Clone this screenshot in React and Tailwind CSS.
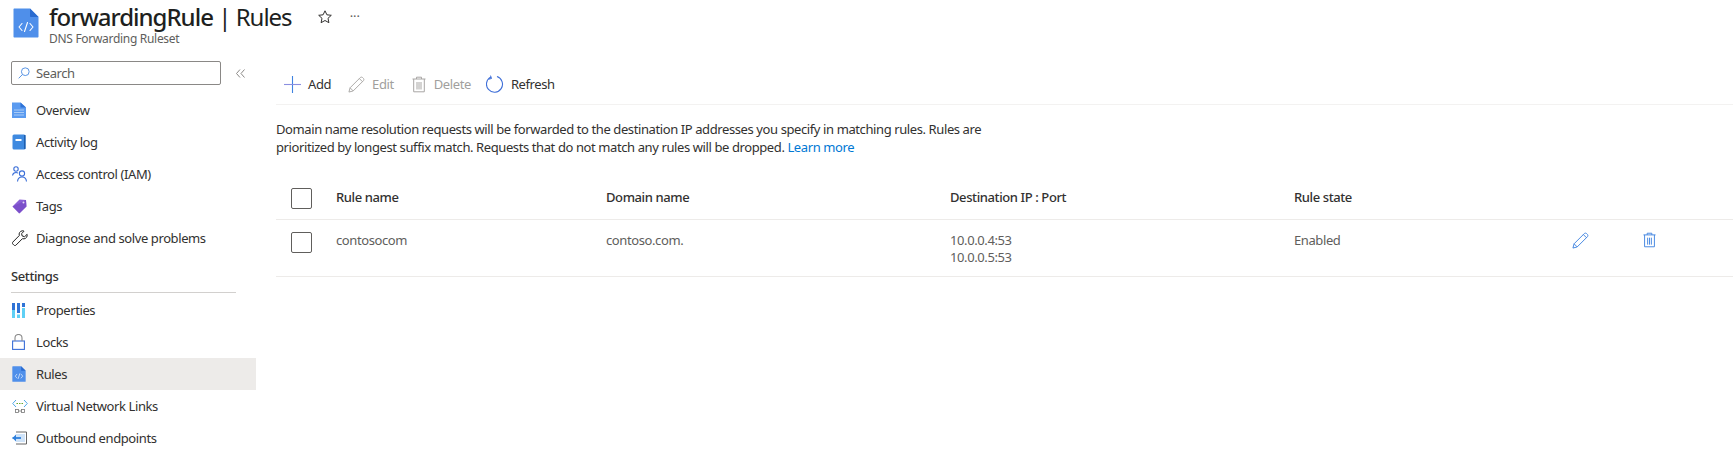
import React from "react";

const Code = ({ big }) => (
  <svg width={big ? 26 : 14} height={big ? 30 : 16} viewBox="0 0 26 30" fill="none">
    <path d="M.5 1.500C.5.900.900.500 1.500.500H17l8.500 8.500v19.500c0 .600-.400 1-1 1h-23c-.600 0-1-.400-1-1z" fill="#4f8fea" />
    <path d="M17 .500 25.500 9H18c-.600 0-1-.400-1-1z" fill="#2a6bd0" />
    <path d="M9 15.500l-3 3.500 3 3.500M17 15.500l3 3.500-3 3.500M14.500 14.500l-3 9" stroke={big ? "#fff" : "#cfe1fa"} strokeWidth={big ? 1.1 : 1.6} strokeLinecap="round" strokeLinejoin="round" />
  </svg>
);

const Overview = () => (
  <svg width="14" height="16" viewBox="0 0 14 16">
    <path d="M0 .500h8.500L14 5.500V16H0z" fill="#5b9bf0" />
    <path d="M8.500.500 14 5.500H8.500z" fill="#2f73d6" />
    <path d="M2 8h10M2 10.500h10M2 13h10" stroke="#a9cbf6" strokeWidth="1" />
  </svg>
);

const Activity = () => (
  <svg width="14" height="16" viewBox="0 0 14 16">
    <rect x="0.500" y="0.500" width="13" height="15" rx="1.500" fill="#3f8ae0" />
    <rect x="12" y="1" width="1.500" height="14" fill="#1f5fae" />
    <rect x="3.500" y="5" width="6" height="2" fill="#fff" />
  </svg>
);

const People = () => (
  <svg width="16" height="16" viewBox="0 0 16 16" fill="none" stroke="#3b6fd8" strokeWidth="1.100">
    <circle cx="4" cy="3" r="2.200" />
    <path d="M.5 9.500C1 7 2.500 6.500 4 6.500c.800 0 1.500.200 2 .600" />
    <circle cx="10" cy="7.500" r="2.600" />
    <path d="M5.500 15.500c.300-3 2-4.500 4.500-4.500s4.200 1.500 4.500 4.500" />
  </svg>
);

const Tag = () => (
  <svg width="15" height="15" viewBox="0 0 15 15">
    <path d="M.5 7.500 7.500.500l6.500.500.500 6.500-7 7z" fill="#8a5fd6" />
    <path d="M.5 7.500 7 14.500l7.500-7L14 1z" fill="#6f42c1" opacity=".55" />
    <circle cx="11.500" cy="3.500" r="1" fill="#e3d6f7" />
  </svg>
);

const Wrench = () => (
  <svg width="16" height="16" viewBox="0 0 16 16" fill="none" stroke="#222" strokeWidth="1">
    <path d="M10.200.800c-2.300.400-3.600 2.500-2.900 4.700L.900 12c-.600.600-.600 1.500 0 2.100l1 1c.600.600 1.500.600 2.100 0l6.400-6.400c2.300.700 4.500-.700 4.800-3 .100-.500 0-1-.100-1.400l-2.500 2.400-2.400-.700-.600-2.300L12 1.200c-.600-.400-1.200-.500-1.800-.4z" />
  </svg>
);

const Bars = () => (
  <svg width="13" height="15" viewBox="0 0 13 15">
    <rect x="0" y="0" width="3" height="7" fill="#2f73d6" />
    <rect x="0" y="7" width="3" height="8" fill="#5fd0f5" />
    <rect x="5" y="0" width="3" height="10" fill="#2f73d6" />
    <rect x="5" y="11.500" width="3" height="3.500" fill="#5fd0f5" />
    <rect x="10" y="0" width="3" height="4" fill="#2f73d6" />
    <rect x="10" y="5" width="3" height="10" fill="#5fd0f5" />
  </svg>
);

const Lock = () => (
  <svg width="13" height="16" viewBox="0 0 13 16" fill="none" stroke="#3b6fd8" strokeWidth="1.100">
    <rect x="0.600" y="7" width="11.800" height="8.400" />
    <path d="M3 7V4a3.500 3.500 0 0 1 7 0v3" stroke="#8a8a8a" />
  </svg>
);

const VNet = () => (
  <svg width="16" height="15" viewBox="0 0 16 15" fill="none">
    <path d="M4 1 .700 4.500 4 8M12 1l3.300 3.500L12 8" stroke="#4fa8e8" strokeWidth="1" />
    <path d="M4.500 4.500h7" stroke="#66a832" strokeWidth="1.200" strokeDasharray="1.500 1" />
    <rect x="3.500" y="10.500" width="3" height="3" stroke="#777" strokeWidth=".8" />
    <rect x="9.500" y="10.500" width="3" height="3" stroke="#777" strokeWidth=".8" />
    <path d="M6.500 12h3" stroke="#777" strokeWidth=".8" />
  </svg>
);

const Outbound = () => (
  <svg width="15" height="14" viewBox="0 0 15 14" fill="none">
    <path d="M4 1h10.500v12H4" stroke="#666" strokeWidth="1" />
    <rect x="4" y="3" width="9" height="8" fill="#cfe3f8" />
    <path d="M.5 7H9" stroke="#2f80dc" strokeWidth="1.800" />
    <path d="M4 3.500.500 7 4 10.500" fill="#2f80dc" />
  </svg>
);

const Pencil = ({ color = "#3f83e0", s = 17 }) => (
  <svg width={s} height={s} viewBox="0 0 18 18" fill="none" stroke={color} strokeWidth="1">
    <path d="M1 17l1.200-4.500L13 1.700c.700-.700 1.800-.700 2.500 0l.800.800c.700.700.700 1.800 0 2.500L5.500 15.800z" />
    <path d="M2.200 12.500l3.300 3.300M12 2.700l3.300 3.300" />
  </svg>
);

const Trash = ({ color = "#3f83e0", w = 13, h = 16 }) => (
  <svg width={w} height={h} viewBox="0 0 14 16" fill="none" stroke={color} strokeWidth="1">
    <path d="M.5 2.500h13M4.500 2.500V.700h5v1.800M1.700 2.500v12.800h10.600V2.500" />
    <path d="M5 5.500v7.500M7 5.500v7.500M9 5.500v7.500" />
  </svg>
);

const Item = ({ icon, label, active }) => (
  <div className={`flex items-center h-8 ${active ? "bg-[#edebe9]" : ""}`}>
    <span className="w-9 pl-[12px] flex items-center shrink-0">{icon}</span>
    <span className="text-[#323130] text-[13px] tracking-[-0.4px] leading-none">{label}</span>
  </div>
);

const cols = "grid grid-cols-[60px_270px_344px_344px_278px_71px_1fr] items-start text-[13px] tracking-[-0.4px] leading-[17px]";

const Box = () => <div className="w-[21px] h-[21px] border border-[#605e5c] rounded-[2px] ml-[15px]" />;

export default function App() {
  return (
    <div className="w-[1733px] h-[457px] overflow-hidden bg-white [font-family:'Noto_Sans',sans-serif] flex flex-col">
      <header className="h-[50px] flex shrink-0 items-start pl-[13px]">
        <div className="pt-[8px] w-9 shrink-0"><Code big /></div>
        <div>
          <div className="flex items-center h-[32px] pt-[1px]">
            <h1 className="text-[24px] leading-[31px] text-[#201f1e] tracking-[-1px]">
              <span className="font-medium">forwardingRule</span> | Rules
            </h1>
            <svg className="ml-[26px]" width="14" height="14" viewBox="0 0 14 14" fill="none" stroke="#323130"><path d="M7 .800l1.900 4 4.400.500-3.300 3 .900 4.400L7 10.500l-3.900 2.200.900-4.400-3.300-3 4.400-.500z" /></svg>
            <span className="ml-[18px] text-[13px] text-[#605e5c] leading-none">···</span>
          </div>
          <div className="text-[12px] leading-4 text-[#605e5c] tracking-[-0.3px] -mt-[1px]">DNS Forwarding Ruleset</div>
        </div>
      </header>
      <div className="flex flex-1 min-h-0">
        <aside className="w-[256px] shrink-0">
          <div className="flex items-center h-[44px] pt-[2px]">
            <div className="ml-[11px] w-[210px] h-[24px] border border-[#8a8886] rounded-[2px] flex items-center pl-[6px]">
              <svg width="12" height="12" viewBox="0 0 14 14" fill="none" stroke="#3f83e0"><circle cx="8.500" cy="5.500" r="4.500" /><path d="M5 9 .800 13.200" /></svg>
              <span className="ml-[6px] text-[13px] text-[#605e5c] tracking-[-0.4px] leading-none">Search</span>
            </div>
            <svg className="ml-[15px]" width="9" height="9" viewBox="0 0 9 9" fill="none" stroke="#8a8886"><path d="M4 .500.500 4.500 4 8.500M8.500.500 5 4.500l3.500 4" /></svg>
          </div>
          <Item icon={<Overview />} label="Overview" />
          <Item icon={<Activity />} label="Activity log" />
          <Item icon={<People />} label="Access control (IAM)" />
          <Item icon={<Tag />} label="Tags" />
          <Item icon={<Wrench />} label="Diagnose and solve problems" />
          <div className="h-[35px] pl-[11px] pt-[14px] text-[13px] leading-[17px] font-medium text-[#323130] tracking-[-0.4px]">Settings</div>
          <div className="ml-[11px] w-[225px] h-[1px] mt-[3px] mb-[1px] bg-[#d2d0ce]" />
          <Item icon={<Bars />} label="Properties" />
          <Item icon={<Lock />} label="Locks" />
          <Item icon={<Code />} label="Rules" active />
          <Item icon={<VNet />} label="Virtual Network Links" />
          <Item icon={<Outbound />} label="Outbound endpoints" />
        </aside>
        <main className="ml-[20px] flex-1 min-w-0">
          <div className="h-[55px] border-b border-[#f3f2f1] flex items-center pl-[8px] pt-[14px] text-[13px] tracking-[-0.4px] leading-none">
            <svg width="17" height="17" viewBox="0 0 17 17" stroke="#3f83e0" strokeWidth="1.100"><path d="M8.500 0v17" /><path d="M0 8.500h17" stroke="#8b8fe0" /></svg>
            <span className="ml-[7px] text-[#323130]">Add</span>
            <span className="ml-[17px] flex"><Pencil color="#a8a6a4" /></span>
            <span className="ml-[7px] text-[#a19f9d]">Edit</span>
            <span className="ml-[18px] flex"><Trash color="#a8a6a4" w={14} h={17} /></span>
            <span className="ml-[8px] text-[#a19f9d]">Delete</span>
            <svg className="ml-[15px]" width="18" height="18" viewBox="0 0 18 18" fill="none"><path d="M11 1.600A8 8 0 1 1 5 2" stroke="#3f6fd8" strokeWidth="1.100" /><path d="M4.500 .600 5.500 3.500 2.500 4.200" stroke="#3f6fd8" strokeWidth="1" /></svg>
            <span className="ml-[7px] text-[#323130]">Refresh</span>
          </div>
          <p className="mt-[15px] w-[730px] text-[13px] tracking-[-0.4px] leading-[18px] text-[#323130]">
            Domain name resolution requests will be forwarded to the destination IP addresses you specify in matching rules. Rules are prioritized by longest suffix match. Requests that do not match any rules will be dropped. <span className="text-[#0078d4]">Learn more</span>
          </p>
          <div className={`${cols} mt-[21px] h-[43px] border-b border-[#edebe9] pt-[11px] text-[#323130] font-medium`}>
            <Box />
            <span className="pt-[1px]">Rule name</span>
            <span className="pt-[1px]">Domain name</span>
            <span className="pt-[1px]">Destination IP : Port</span>
            <span className="pt-[1px]">Rule state</span>
          </div>
          <div className={`${cols} h-[57px] border-b border-[#edebe9] pt-[12px] text-[#605e5c]`}>
            <Box />
            <span>contosocom</span>
            <span>contoso.com.</span>
            <span>10.0.0.4:53<br />10.0.0.5:53</span>
            <span>Enabled</span>
            <span><Pencil /></span>
            <span><Trash /></span>
          </div>
        </main>
      </div>
    </div>
  );
}
